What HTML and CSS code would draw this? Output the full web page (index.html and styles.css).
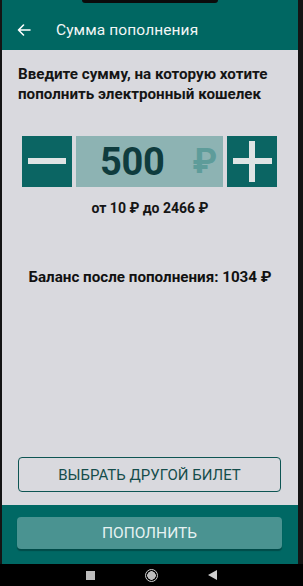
FILE: index.html
```html
<!DOCTYPE html>
<html lang="ru">
<head>
<meta charset="utf-8">
<link rel="stylesheet" href="styles.css">
</head>
<body>
<div class="frame">
  <div class="notch"></div>
  <div class="screen">
    <header class="appbar">
      <svg class="back" width="14" height="12" viewBox="0 0 14 12"><path d="M13 6H1.5M6.5 1L1.5 6L6.5 11" fill="none" stroke="#fff" stroke-width="1.6" stroke-linecap="round" stroke-linejoin="round"/></svg>
      <span class="title">Сумма пополнения</span>
    </header>
    <main class="content">
      <p class="lead">Введите сумму, на которую хотите пополнить электронный кошелек</p>
      <div class="stepper">
        <div class="step minus"><span class="bar-h"></span></div>
        <div class="amount"><span class="num">500</span><span class="cur">₽</span></div>
        <div class="step plus"><span class="bar-h"></span><span class="bar-v"></span></div>
      </div>
      <p class="range">от 10 ₽ до 2466 ₽</p>
      <p class="balance">Баланс после пополнения: 1034 ₽</p>
      <button class="outline">ВЫБРАТЬ ДРУГОЙ БИЛЕТ</button>
    </main>
    <footer class="bottom">
      <button class="primary">ПОПОЛНИТЬ</button>
    </footer>
  </div>
  <nav class="navbar">
    <span class="nav-square"></span>
    <span class="nav-circle"></span>
    <span class="nav-back"></span>
  </nav>
</div>
</body>
</html>
```
FILE: styles.css
```css
* { box-sizing: border-box; }
html, body { margin: 0; padding: 0; }
body {
  width: 303px;
  height: 586px;
  background: #111;
  font-family: Roboto, "Noto Sans", sans-serif;
  overflow: hidden;
}
.frame {
  position: relative;
  display: flex;
  flex-direction: column;
  height: 586px;
  padding: 0 5px 0 2px;
  background: #141414;
}
.notch {
  position: absolute;
  left: 82px;
  top: 0;
  width: 136px;
  height: 3px;
  background: #0b0b0b;
  border-radius: 0 0 6px 6px;
  z-index: 2;
}
.screen {
  flex: 1;
  display: flex;
  flex-direction: column;
  background: #d9d9de;
}
.appbar {
  height: 50px;
  background: #006762;
  display: flex;
  align-items: center;
  padding: 10px 0 0 15px;
}
.back { margin-right: 25px; }
.title {
  color: #f2f6f6;
  font-size: 15.5px;
  font-weight: 400;
  letter-spacing: 0.1px;
}
.content {
  flex: 1;
  display: flex;
  flex-direction: column;
  padding: 14px 0 13px 0;
}
.lead {
  margin: 0 16px;
  font-size: 15.2px;
  line-height: 20px;
  font-weight: 700;
  color: #151515;
}
.stepper {
  display: flex;
  gap: 4px;
  margin: 32px 0 0 20px;
  height: 51px;
}
.step {
  position: relative;
  width: 50px;
  height: 51px;
  background: #0b6563;
}
.bar-h {
  position: absolute;
  left: 6px;
  right: 6px;
  top: 22px;
  height: 6px;
  background: #dfe4e4;
}
.plus .bar-h { left: 6px; right: 5px; }
.bar-v {
  position: absolute;
  left: 22px;
  width: 6px;
  top: 5px;
  bottom: 5px;
  background: #dfe4e4;
}
.amount {
  width: 147px;
  background: #8db3b3;
  display: flex;
  align-items: center;
  padding-left: 24px;
}
.num {
  font-size: 38px;
  font-weight: 700;
  color: #0f3c3e;
  letter-spacing: -0.3px;
}
.cur {
  margin-left: 28px;
  font-size: 35px;
  font-weight: 700;
  color: #5e9c9a;
}
.range {
  margin: 13px 0 0 0;
  text-align: center;
  font-size: 14px;
  font-weight: 700;
  color: #151515;
}
.balance {
  margin: 52px 0 0 0;
  text-align: center;
  font-size: 15.2px;
  font-weight: 700;
  color: #111;
}
.outline {
  margin: auto 17px 0 16px;
  height: 35px;
  background: transparent;
  border: 1.5px solid #0d5553;
  border-radius: 4px;
  font-family: inherit;
  font-size: 15px;
  color: #154d4b;
  letter-spacing: 0;
}
.bottom {
  height: 59px;
  background: #006864;
  padding: 12px 16px 0 15px;
}
.primary {
  width: 100%;
  height: 32px;
  border: none;
  border-radius: 4px;
  background: #4a9391;
  box-shadow: 0 2px 1px rgba(0,40,40,0.45);
  color: #e6f2f2;
  font-family: inherit;
  font-size: 15.5px;
  letter-spacing: 0;
}
.navbar {
  height: 22px;
  background: #000;
  display: flex;
  align-items: center;
  justify-content: center;
  margin: 0 -5px 0 -2px;
}
.nav-square {
  width: 9px;
  height: 9px;
  background: #bdbdbd;
  margin-right: 50px;
}
.nav-circle {
  width: 13px;
  height: 13px;
  border-radius: 50%;
  border: 1.5px solid #cfcfcf;
  background: radial-gradient(circle, #bdbdbd 0 4px, transparent 4.5px);
  margin-right: 50px;
}
.nav-back {
  width: 0;
  height: 0;
  border-top: 5.5px solid transparent;
  border-bottom: 5.5px solid transparent;
  border-right: 9px solid #cfcfcf;
}
```
